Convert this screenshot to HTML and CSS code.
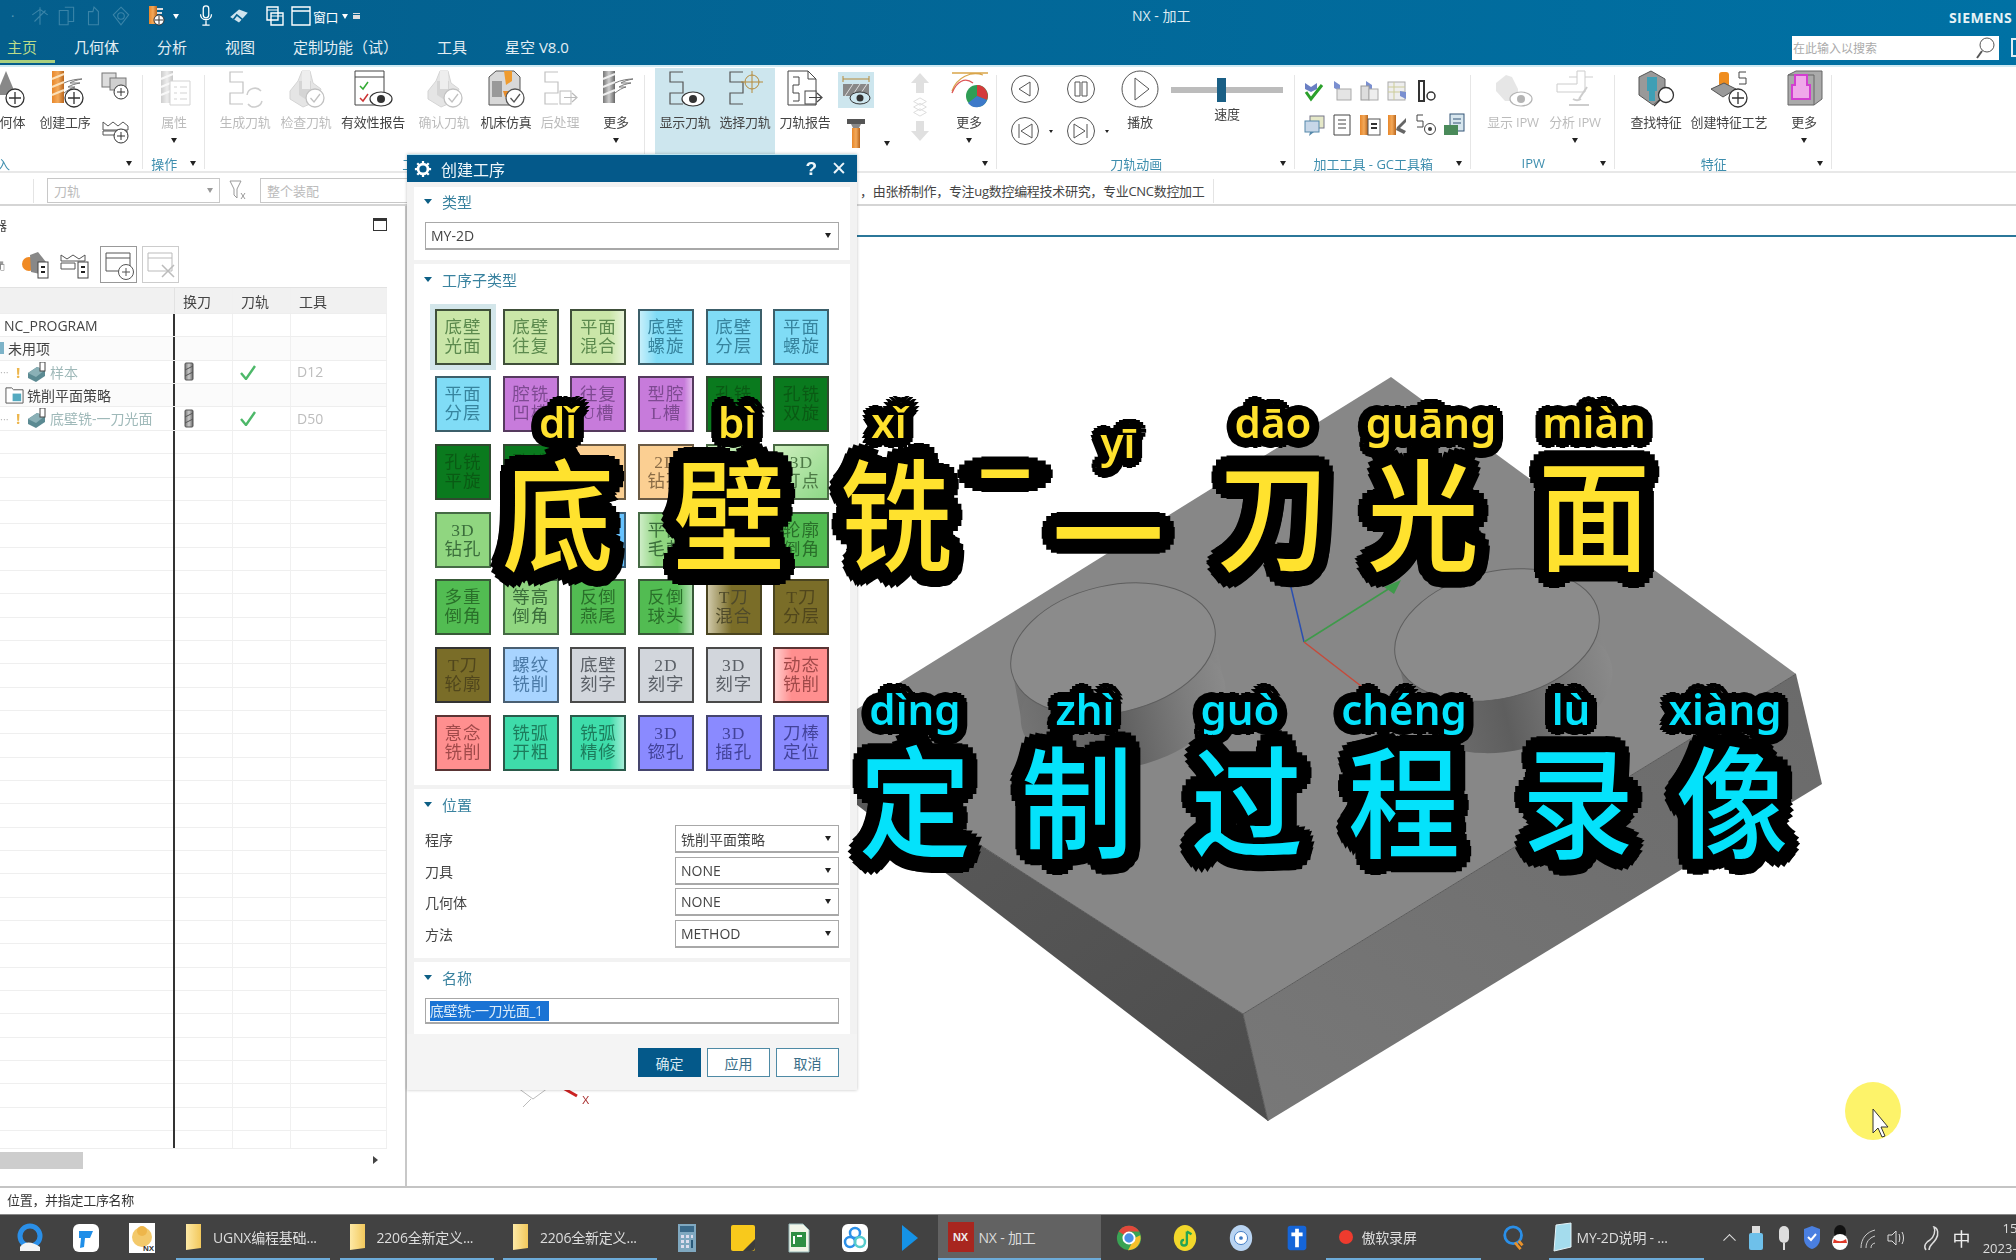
FILE: index.html
```html
<!DOCTYPE html>
<html lang="zh-CN">
<head>
<meta charset="utf-8">
<title>NX - 加工</title>
<link rel="stylesheet" href="styles.css">
</head>
<body>
<svg class="defs" width="0" height="0" aria-hidden="true">
  <defs>
    <linearGradient id="org" x1="0" y1="0" x2="1" y2="0"><stop offset="0" stop-color="#e8872a"/><stop offset=".5" stop-color="#f3a95a"/><stop offset="1" stop-color="#b9651c"/></linearGradient>
    <linearGradient id="gry" x1="0" y1="0" x2="1" y2="0"><stop offset="0" stop-color="#777"/><stop offset=".5" stop-color="#ccc"/><stop offset="1" stop-color="#666"/></linearGradient>
    <linearGradient id="fld" x1="0" y1="0" x2="1" y2="0"><stop offset="0" stop-color="#fde9a6"/><stop offset="1" stop-color="#f2c85c"/></linearGradient>
    <linearGradient id="cyl" x1="0" y1="0" x2="1" y2="0"><stop offset="0" stop-color="#747474"/><stop offset=".45" stop-color="#5e5e5e"/><stop offset=".8" stop-color="#7d7d7d"/><stop offset="1" stop-color="#8a8a8a"/></linearGradient>
    <linearGradient id="lface" x1="0" y1="0" x2="1" y2="1"><stop offset="0" stop-color="#5c5c5c"/><stop offset="1" stop-color="#4c4c4c"/></linearGradient>
    <linearGradient id="rface" x1="0" y1="1" x2="1" y2="0"><stop offset="0" stop-color="#787878"/><stop offset="1" stop-color="#6a6a6a"/></linearGradient>
    <g id="plus"><circle cx="29" cy="29" r="9" fill="#fff" stroke="#333" stroke-width="1.3"/><path d="M29 23v12M23 29h12" stroke="#333" stroke-width="1.3"/></g>
    <g id="chk"><circle cx="29" cy="29" r="9" fill="#fff" stroke="#555" stroke-width="1.3"/><path d="M24.5 29l3.5 4 6-8" fill="none" stroke="#555" stroke-width="1.3"/></g>
    <g id="eye"><ellipse cx="28" cy="30" rx="11" ry="7" fill="#fff" stroke="#333" stroke-width="1.2"/><circle cx="28" cy="30" r="4" fill="#333"/></g>
    <path id="serp" d="M18 3H5v10h13v11H5v11h13" fill="none" stroke="#555" stroke-width="1.2"/>
    <g id="mill"><rect x="7" y="2" width="12" height="32" fill="url(#org)"/><path d="M7 10l12-5M7 18l12-5M7 26l12-5" stroke="#fbe0b8" stroke-width="2"/></g>
    <g id="gmill"><rect x="7" y="2" width="12" height="32" fill="url(#gry)"/><path d="M7 10l12-5M7 18l12-5M7 26l12-5" stroke="#eee" stroke-width="2"/></g>
    <path id="wings" d="M19 14c6-3 13-4 18-4-5 1-9 2-12 4h10c-5 1-9 2-12 4h7c-4 1-7 3-11 6" fill="#fff" stroke="#777"/>
    <g id="block"><path d="M4 22l8-10 4-10h8l3 12 8 6-4 12-14 6-13-8z" fill="#b9b9b9" stroke="#888"/><path d="M13 12h12v14l-6 4-6-4z" fill="#8e8e8e"/><path d="M16 2h8v18h-8z" fill="#d2d2d2"/></g>
    <g id="report"><path d="M3 2h20l8 8v26H3z" fill="#fff" stroke="#444"/><path d="M23 2v8h8M8 8h6M14 8v8H8v8h6v8H8" fill="none" stroke="#444"/></g>
    <g id="arrowbox"><rect x="20" y="22" width="11" height="13" fill="#fff" stroke="#444"/><path d="M24 28.500h12M32 24l5 4.500-5 4.500" fill="none" stroke="#444" stroke-width="1.200"/></g>
    <g id="nxop"><path d="M1 11l9-6 8 3v6l-9 6-8-4z" fill="#5b8a92"/><path d="M1 11l8 4 9-7-8-3z" fill="#8ab0b6"/><rect x="13" y="0" width="5" height="9" fill="#fff" stroke="#444"/></g>
    <g id="cdrill"><rect x="1" y="1" width="8" height="17" rx="1" fill="url(#gry)" stroke="#555"/><path d="M1 8l8-4M1 14l8-4" stroke="#555"/></g>
    <path id="tick" d="M1 9l5 6 9-13" fill="none" stroke="#4db869" stroke-width="2.400"/>
  </defs>
</svg>

<div class="app">
  <header class="titlebar">
    <div class="quick">
      <span class="q-dot">·</span>
      <svg class="qi q-a dim" viewBox="0 0 20 20"><path d="M10 2v16M3 9l7-5 7 5M5 15l10-10" fill="none" stroke="currentColor"/></svg>
      <svg class="qi q-b dim" viewBox="0 0 20 20"><path d="M3 5h8v13H3zM8 2h8v13h-5" fill="none" stroke="currentColor"/></svg>
      <svg class="qi q-b dim" viewBox="0 0 20 20"><path d="M5 18V6h4l1-4 4 4v12z" fill="none" stroke="currentColor"/></svg>
      <svg class="qi q-b dim" viewBox="0 0 20 20"><path d="M10 2l7 7-7 9-7-9z" fill="none" stroke="currentColor"/><circle cx="10" cy="10" r="3" fill="none" stroke="currentColor"/></svg>
      <svg class="qi q-c" viewBox="0 0 20 22"><rect x="3" y="1" width="8" height="18" fill="url(#org)"/><circle cx="13" cy="15" r="5" fill="#fff" stroke="#333"/><path d="M13 11v8M9 15h8" stroke="#333"/><path d="M11 4h6M11 8h5" stroke="#ddd" stroke-width="2"/></svg>
      <span class="car w q-car"></span>
      <svg class="qi q-d" viewBox="0 0 20 24"><rect x="7" y="1" width="6" height="13" rx="3" fill="none" stroke="#fff" stroke-width="1.400"/><path d="M4 10c0 8 12 8 12 0M10 17v5M6 22h8" fill="none" stroke="#fff" stroke-width="1.400"/></svg>
      <svg class="qi q-e" viewBox="0 0 20 20"><path d="M2 11l8-7 8 3-8 9z" fill="#cfe4ee"/><path d="M5 13l3-4 5 4" fill="none" stroke="#05618f" stroke-width="1.500"/></svg>
      <svg class="qi q-f" viewBox="0 0 20 22"><path d="M2 2h11v13H2zM6 8h12v12H6z" fill="none" stroke="#fff" stroke-width="1.400"/><path d="M2 5h11M6 11h12" stroke="#fff"/></svg>
      <svg class="qi q-g" viewBox="0 0 20 22"><path d="M1 2h18v18H1zM1 6h18" fill="none" stroke="#fff" stroke-width="1.400"/></svg>
      <span class="q-text">窗口</span>
      <span class="car w q-c2"></span>
      <span class="q-more"></span>
    </div>
    <div class="app-title">NX - 加工</div>
    <div class="brand">SIEMENS</div>
    <nav class="tabs">
      <a class="tab t1 on">主页</a><a class="tab t2">几何体</a><a class="tab t3">分析</a><a class="tab t4">视图</a><a class="tab t5">定制功能（试）</a><a class="tab t6">工具</a><a class="tab t7">星空 V8.0</a>
      <div class="search"><span>在此输入以搜索</span><svg viewBox="0 0 20 24" width="20" height="24"><circle cx="12" cy="9" r="7" fill="#fff" stroke="#555"/><path d="M7 15l-5 7" stroke="#555" stroke-width="2"/></svg></div>
      <span class="win-frame"></span>
    </nav>
  </header>

  <section class="ribbon">
    <div class="grp g1">
      <div class="tools">
        <div class="tool t-a"><svg class="ic" viewBox="0 0 40 40"><path d="M10 26L20 2l10 24z" fill="#888"/><use href="#plus"/></svg><span class="lb">几何体</span></div>
        <div class="tool t-b"><svg class="ic" viewBox="0 0 40 40"><use href="#mill"/><use href="#wings"/><use href="#plus"/></svg><span class="lb">创建工序</span></div>
        <div class="smallcol">
          <svg class="ic-s" viewBox="0 0 30 30"><rect x="1" y="2" width="14" height="14" fill="#ddd" stroke="#777"/><rect x="9" y="7" width="16" height="12" fill="#cfcfcf" stroke="#777"/><circle cx="20" cy="21" r="7" fill="#fff" stroke="#333"/><path d="M20 17v8M16 21h8" stroke="#333"/></svg>
          <svg class="ic-s" viewBox="0 0 30 30"><path d="M2 8l5 4 5-4 5 4 5-4 5 4v4H2zM2 17h24v4H2z" fill="#fff" stroke="#555"/><circle cx="20" cy="22" r="7" fill="#fff" stroke="#333"/><path d="M20 18v8M16 22h8" stroke="#333"/></svg>
        </div>
      </div>
      <div class="foot f1"><span class="gl gl-in">插入</span><i class="car"></i></div>
    </div>
    <div class="grp g2">
      <div class="tools">
        <div class="tool off"><svg class="ic" viewBox="0 0 40 40"><use href="#gmill"/><path d="M16 12h20v24H16z" fill="#fff" stroke="#888"/><path d="M20 18h3M26 18h7M20 24h3M26 24h7M20 30h3M26 30h7" stroke="#888"/></svg><span class="lb">属性</span><i class="car mt"></i></div>
      </div>
      <div class="foot"><span class="gl">操作</span><i class="car"></i></div>
    </div>
    <div class="grp g3">
      <div class="tools">
        <div class="tool off"><svg class="ic" viewBox="0 0 40 40"><use href="#serp"/><path d="M22 26a8 8 0 0 1 14-4M37 32a8 8 0 0 1-14 3" fill="none" stroke="#777" stroke-width="1.500"/></svg><span class="lb">生成刀轨</span></div>
        <div class="tool off"><svg class="ic" viewBox="0 0 40 40"><use href="#block"/><use href="#chk"/></svg><span class="lb">检查刀轨</span></div>
        <div class="tool"><svg class="ic" viewBox="0 0 40 40"><path d="M2 2h29v34H2z" fill="#fff" stroke="#444"/><path d="M2 8h29" stroke="#444"/><path d="M7 17l3 3 5-7" fill="none" stroke="#3a3" stroke-width="1.500"/><path d="M7 29l3 3 5-7" fill="none" stroke="#c33" stroke-width="1.500"/><use href="#eye"/></svg><span class="lb">有效性报告</span></div>
        <div class="tool off"><svg class="ic" viewBox="0 0 40 40"><use href="#block"/><use href="#chk"/></svg><span class="lb">确认刀轨</span></div>
        <div class="tool"><svg class="ic" viewBox="0 0 40 40"><path d="M3 8l7-6h18l6 6v28H3z" fill="#d8d8d8" stroke="#555"/><rect x="6" y="12" width="10" height="16" fill="#999"/><path d="M18 2h8v10l-6 4z" fill="#ef9b2e"/><path d="M17 22h10v6h-8z" fill="#e88c2a"/><use href="#chk"/></svg><span class="lb">机床仿真</span></div>
        <div class="tool off"><svg class="ic" viewBox="0 0 40 40"><use href="#serp"/><use href="#arrowbox"/></svg><span class="lb">后处理</span></div>
        <div class="tool"><svg class="ic" viewBox="0 0 40 40"><use href="#gmill"/><use href="#wings"/></svg><span class="lb">更多</span><i class="car mt"></i></div>
      </div>
      <div class="foot"><span class="gl">工序</span><i class="car"></i></div>
    </div>
    <div class="grp g4">
      <div class="tools">
        <div class="tool on"><svg class="ic" viewBox="0 0 40 40"><use href="#serp"/><use href="#eye"/></svg><span class="lb">显示刀轨</span></div>
        <div class="tool on"><svg class="ic" viewBox="0 0 40 40"><use href="#serp"/><circle cx="27" cy="13" r="7" fill="none" stroke="#b58a3a"/><path d="M27 2v22M16 13h22" stroke="#b58a3a"/></svg><span class="lb">选择刀轨</span></div>
        <div class="tool"><svg class="ic" viewBox="0 0 40 40"><use href="#report"/><use href="#arrowbox"/></svg><span class="lb">刀轨报告</span></div>
        <div class="smallcol sc2">
          <svg class="ic-h" viewBox="0 0 36 36"><rect width="36" height="36" fill="#cde6ee"/><path d="M5 7h26M5 4v6M31 4v6" stroke="#b58a3a"/><rect x="5" y="12" width="26" height="12" fill="#888"/><path d="M7 24l8-12M14 24l8-12M21 24l8-12" stroke="#ddd"/><ellipse cx="22" cy="26" rx="10" ry="6" fill="#cde6ee" stroke="#333"/><circle cx="22" cy="26" r="3.500" fill="#333"/></svg>
          <svg class="ic-t" viewBox="0 0 20 32"><path d="M1 2h18v5H1z" fill="#555"/><path d="M5 7h10l-2 4H7z" fill="#888"/><rect x="6" y="11" width="8" height="20" fill="url(#org)"/></svg>
        </div>
        <div class="carcol"><i class="car"></i></div>
        <div class="updown off">
          <svg viewBox="0 0 20 22" width="20" height="22"><path d="M10 1l9 10h-5v10H6V11H1z" fill="#aaa"/></svg>
          <svg viewBox="0 0 20 22" width="20" height="20"><path d="M3 5l7-4 7 4-7 4zM3 11l7-4 7 4-7 4zM3 17l7-4 7 4-7 4z" fill="#fff" stroke="#999"/></svg>
          <svg viewBox="0 0 20 22" width="20" height="22"><path d="M10 21L1 11h5V1h8v10h5z" fill="#aaa"/></svg>
        </div>
        <div class="tool"><svg class="ic" viewBox="0 0 40 40"><path d="M3 4h36M3 22C8 8 22 2 34 6" fill="none" stroke="#d9a54a" stroke-width="1.300"/><path d="M3 24C8 12 16 8 24 14" fill="none" stroke="#d55" stroke-width="1.300"/><circle cx="28" cy="27" r="11" fill="#2f9d55"/><path d="M28 27V16a11 11 0 0 1 10 15z" fill="#d43b3b"/><path d="M28 27l10 4a11 11 0 0 1-19 3z" fill="#3d79c9"/></svg><span class="lb">更多</span><i class="car mt"></i></div>
      </div>
      <div class="foot"><span class="gl"></span><i class="car"></i></div>
    </div>
    <div class="grp g5">
      <div class="tools">
        <div class="anim">
          <svg class="ac" viewBox="0 0 56 32"><circle cx="28" cy="16" r="13.500" fill="none" stroke="#555"/><path d="M33 9v14l-11-7z" fill="none" stroke="#555"/></svg>
          <svg class="ac" viewBox="0 0 56 32"><circle cx="28" cy="16" r="13.500" fill="none" stroke="#555"/><path d="M21 9v14l11-7zM34 9v14" transform="matrix(-1 0 0 1 56 0)" fill="none" stroke="#555"/><path d="M52 15h4l-2 3z" fill="#222"/></svg>
        </div>
        <div class="anim">
          <svg class="ac" viewBox="0 0 56 32"><circle cx="28" cy="16" r="13.500" fill="none" stroke="#555"/><path d="M22 9h5v14h-5zM29 9h5v14h-5z" fill="none" stroke="#555"/></svg>
          <svg class="ac" viewBox="0 0 56 32"><circle cx="28" cy="16" r="13.500" fill="none" stroke="#555"/><path d="M21 9v14l11-7zM34 9v14" fill="none" stroke="#555"/><path d="M52 15h4l-2 3z" fill="#222"/></svg>
        </div>
        <div class="tool"><svg class="ic" viewBox="0 0 40 40"><circle cx="20" cy="20" r="18" fill="none" stroke="#555"/><path d="M15 9v22l14-11z" fill="none" stroke="#555"/></svg><span class="lb">播放</span></div>
        <div class="speed"><div class="slider"><i></i></div><span class="lb">速度</span></div>
      </div>
      <div class="foot"><span class="gl">刀轨动画</span><i class="car"></i></div>
    </div>
    <div class="grp g6">
      <div class="tools">
        <div class="mini">
          <svg viewBox="0 0 24 24"><path d="M3 4l6 4 6-4v6l-6 3-6-3z" fill="#6a7fc4"/><path d="M4 13l5 7 11-14" fill="none" stroke="#2ba02b" stroke-width="3"/></svg>
          <svg viewBox="0 0 24 24"><path d="M4 2l6 4v6L4 9z" fill="#7a8fd0"/><rect x="7" y="10" width="14" height="11" fill="#e4e4e4" stroke="#aaa"/></svg>
          <svg viewBox="0 0 24 24"><path d="M8 2l6 4v6L8 9z" fill="#7a8fd0"/><rect x="3" y="7" width="8" height="14" fill="#ddd" stroke="#999"/><rect x="11" y="10" width="9" height="11" fill="#eee" stroke="#aaa"/></svg>
          <svg viewBox="0 0 24 24"><rect x="2" y="3" width="17" height="18" fill="#eee" stroke="#aaa"/><path d="M2 8h17M2 13h17M8 3v18" stroke="#cc9"/><path d="M14 12l6 1v7l-6-3z" fill="#7a8fd0"/></svg>
          <svg viewBox="0 0 24 24"><path d="M5 2h5v20H5z" fill="none" stroke="#333" stroke-width="2"/><circle cx="17" cy="17" r="4" fill="none" stroke="#333" stroke-width="1.500"/></svg>
          <i></i>
          <svg viewBox="0 0 24 24"><rect x="8" y="3" width="14" height="12" fill="#e5e8c8" stroke="#778"/><rect x="3" y="8" width="14" height="11" fill="#c7d7e8" stroke="#58a"/><path d="M8 19l-1 4 5-4" fill="#58a"/></svg>
          <svg viewBox="0 0 24 24"><path d="M4 2h16v20H4z" fill="#fff" stroke="#444"/><path d="M8 7h8M8 11h8M8 15h8" stroke="#444"/></svg>
          <svg viewBox="0 0 24 24"><rect x="2" y="2" width="8" height="20" fill="url(#org)"/><rect x="10" y="6" width="12" height="16" fill="#fff" stroke="#555"/><path d="M13 11h6M13 15h6" stroke="#333" stroke-width="2"/></svg>
          <svg viewBox="0 0 24 24"><rect x="2" y="2" width="8" height="20" fill="url(#org)"/><path d="M11 14l9-9v4l-6 6 6 3-2 3-8-4z" fill="#666"/></svg>
          <svg viewBox="0 0 24 24"><path d="M9 2H3v6h6v6H3" fill="none" stroke="#444"/><circle cx="16" cy="16" r="5.500" fill="#fff" stroke="#444"/><circle cx="16" cy="16" r="2" fill="#444"/></svg>
          <svg viewBox="0 0 24 24"><rect x="8" y="1" width="14" height="17" fill="#d7e6ee" stroke="#357"/><path d="M11 6h8M11 10h8" stroke="#357"/><rect x="2" y="12" width="14" height="10" fill="#4a8a5a"/></svg>
        </div>
      </div>
      <div class="foot"><span class="gl">加工工具 - GC工具箱</span><i class="car"></i></div>
    </div>
    <div class="grp g7">
      <div class="tools">
        <div class="tool off"><svg class="ic" viewBox="0 0 40 40"><path d="M3 14l10-8 6 2 6 12v12H12L3 22z" fill="#bbb"/><use href="#eye"/></svg><span class="lb">显示 IPW</span></div>
        <div class="tool off"><svg class="ic" viewBox="0 0 40 40"><path d="M2 15h20v-13h8v21H2z" fill="#fff" stroke="#777"/><path d="M14 8h8M30 8h8" stroke="#777"/><path d="M32 18l-8 12M14 36h20M26 30a8 8 0 0 1-8 0" fill="none" stroke="#777" stroke-width="2"/></svg><span class="lb">分析 IPW</span><i class="car mt"></i></div>
      </div>
      <div class="foot"><span class="gl">IPW</span><i class="car"></i></div>
    </div>
    <div class="grp g8">
      <div class="tools">
        <div class="tool"><svg class="ic" viewBox="0 0 40 40"><path d="M3 8l12-6 14 8v16l-12 10-14-10z" fill="#999" stroke="#555"/><path d="M11 8h10v14h-2v10h-6V22h-2z" fill="#3f9fb5"/><circle cx="30" cy="26" r="7.500" fill="#fff" stroke="#333" stroke-width="1.300"/><path d="M24 31l-6 6" stroke="#333" stroke-width="1.500"/></svg><span class="lb">查找特征</span></div>
        <div class="tool"><svg class="ic" viewBox="0 0 40 40"><rect x="10" y="3" width="10" height="15" rx="3" fill="#ef8d1f"/><path d="M2 20l13-6 12 6-13 8z" fill="#9a9a9a" stroke="#555"/><path d="M37 3h-7v6h7v6h-7" fill="none" stroke="#444"/><use href="#plus"/></svg><span class="lb">创建特征工艺</span></div>
        <div class="tool"><svg class="ic" viewBox="0 0 40 40"><path d="M4 6l8-4h26v28l-8 6H4z" fill="#aaa" stroke="#666"/><path d="M4 6h26v30" fill="none" stroke="#666"/><path d="M11 6h12v10h3v14H8V16h3z" fill="#f0a8ea" stroke="#d23fd0" stroke-width="2"/></svg><span class="lb">更多</span><i class="car mt"></i></div>
      </div>
      <div class="foot"><span class="gl">特征</span><i class="car"></i></div>
    </div>
  </section>

  <section class="filterbar">
    <span class="fb-sep"></span>
    <div class="fb-sel s1"><span>刀轨</span><i class="car g"></i></div>
    <svg class="fb-ic" viewBox="0 0 20 24" width="20" height="24"><path d="M2 2h11l-4 8v9l-3-3v-6z" fill="#fff" stroke="#999"/><path d="M13 14l4 6M17 14l-4 6" stroke="#999"/></svg>
    <div class="fb-sel s2"><span>整个装配</span></div>
    <span class="fb-note">，由张桥制作，专注ug数控编程技术研究，专业CNC数控加工</span>
    <span class="fb-sep2"></span>
  </section>

  <main class="workspace">
    <aside class="navpanel">
      <div class="nav-head"><span class="nav-title">工序导航器</span><span class="maxbtn"></span></div>
      <div class="nav-tools">
        <svg viewBox="0 0 30 30" class="nt n1"><rect x="-10" y="6" width="18" height="20" fill="#999"/><rect x="2" y="14" width="8" height="14" fill="#fff" stroke="#555"/></svg>
        <svg viewBox="0 0 30 30" class="nt n2"><circle cx="9" cy="14" r="7" fill="#f08a24"/><path d="M10 5l8-3 8 10-6 12-9-2z" fill="#888"/><rect x="18" y="12" width="10" height="16" fill="#fff" stroke="#444"/><path d="M21 17h4M21 22h4" stroke="#222" stroke-width="2"/></svg>
        <svg viewBox="0 0 30 30" class="nt n3"><path d="M1 5l6 4 6-4 6 4 6-4v6H1zM1 13h14v6H1z" fill="#fff" stroke="#555"/><rect x="18" y="12" width="10" height="16" fill="#fff" stroke="#444"/><path d="M21 17h4M21 22h4" stroke="#222" stroke-width="2"/></svg>
        <span class="nbtn"><svg viewBox="0 0 32 32" width="32" height="32"><path d="M3 4h24v18H3zM3 9h24" fill="none" stroke="#555"/><circle cx="23" cy="23" r="7.500" fill="#fff" stroke="#555"/><path d="M23 19v8M19 23h8" stroke="#555"/></svg></span>
        <span class="nbtn dis"><svg viewBox="0 0 32 32" width="32" height="32"><path d="M3 4h24v18H3zM3 9h24" fill="none" stroke="#bbb"/><path d="M17 16l12 12M29 16L17 28" stroke="#bbb" stroke-width="1.500"/></svg></span>
      </div>
      <div class="table">
        <div class="row head"><div class="c1"></div><div class="c2">换刀</div><div class="c3">刀轨</div><div class="c4">工具</div></div>
        <div class="row"><div class="c1 ind-a">NC_PROGRAM</div><div class="c2"></div><div class="c3"></div><div class="c4"></div></div>
        <div class="row alt"><div class="c1 ind-b"><i class="blue-sq"></i>未用项</div><div class="c2"></div><div class="c3"></div><div class="c4"></div></div>
        <div class="row"><div class="c1 ind-c"><span class="dots">···</span><span class="warn">!</span><svg class="opi" viewBox="0 0 20 20"><use href="#nxop"/></svg><span class="muted">样本</span></div><div class="c2"><svg class="cd" viewBox="0 0 10 19"><use href="#cdrill"/></svg></div><div class="c3"><svg class="ct" viewBox="0 0 16 16"><use href="#tick"/></svg></div><div class="c4 tl">D12</div></div>
        <div class="row alt"><div class="c1 ind-d"><svg class="fo" viewBox="0 0 20 21"><path d="M1 3h6l2 2h10v14H1z" fill="#fff" stroke="#555"/><rect x="8" y="9" width="9" height="8" fill="#55aac0"/></svg>铣削平面策略</div><div class="c2"></div><div class="c3"></div><div class="c4"></div></div>
        <div class="row"><div class="c1 ind-c"><span class="dots">···</span><span class="warn">!</span><svg class="opi" viewBox="0 0 20 20"><use href="#nxop"/></svg><span class="muted">底壁铣-一刀光面</span></div><div class="c2"><svg class="cd" viewBox="0 0 10 19"><use href="#cdrill"/></svg></div><div class="c3"><svg class="ct" viewBox="0 0 16 16"><use href="#tick"/></svg></div><div class="c4 tl">D50</div></div>
        <div class="row filler"><div class="c1"></div><div class="c2"></div><div class="c3"></div><div class="c4"></div></div>
      </div>
      <div class="hscroll"><i class="thumb"></i><i class="sarrow"></i></div>
    </aside>

    <section class="viewport">
      <div class="vp-tabs"></div>
      <svg class="model" viewBox="408 208 1608 980" width="1608" height="980">
        <path d="M814 739L1245 1016 1270 1123 850 800z" fill="url(#lface)"/>
        <path d="M1245 1016L1798 676 1824 786 1270 1123z" fill="url(#rface)"/>
        <path d="M1393 379L1798 676 1245 1016 814 739z" fill="#878787"/>
        <path d="M1245 1016L1798 676M1245 1016L814 739M1245 1016L1270 1123" stroke="#5a5a5a" stroke-width="1" fill="none"/>
        <path d="M1013 665L1217 637 1227 692 1023 720z" fill="url(#cyl)"/>
        <ellipse cx="1125" cy="706" rx="104" ry="63.500" transform="rotate(-13 1125 706)" fill="url(#cyl)"/>
        <ellipse cx="1115" cy="651" rx="104" ry="63.500" transform="rotate(-13 1115 651)" fill="#8b8b8b" stroke="#5e5e5e"/>
        <path d="M1397 651L1601 623 1614 675 1410 703z" fill="url(#cyl)"/>
        <ellipse cx="1512" cy="689" rx="104" ry="63.500" transform="rotate(-13 1512 689)" fill="url(#cyl)"/>
        <ellipse cx="1499" cy="637" rx="104" ry="63.500" transform="rotate(-13 1499 637)" fill="#8b8b8b" stroke="#5e5e5e"/>
        <path d="M1306 644L1286 560" stroke="#2b4fb0" stroke-width="1.500"/>
        <path d="M1306 644L1392 590" stroke="#3e9a4a" stroke-width="1.500"/>
        <path d="M1386 589l17-7-7 14z" fill="#3e9a4a"/>
        <path d="M1306 644L1385 705" stroke="#c64a3a" stroke-width="1.500"/>
        <path d="M520 1090l15 11 15-11M533 1101l-8 8" stroke="#bbb" fill="none"/>
        <path d="M565 1090l14 8" stroke="#c22" stroke-width="3"/>
        <text x="584" y="1106" class="axis-x">X</text>
        <ellipse cx="1875" cy="1113" rx="28" ry="29" fill="#fdf36a"/>
        <path d="M1875 1111v24l5-5 4 9 3-1-4-9h7z" fill="#fff" stroke="#333"/>
      </svg>
    </section>
  </main>

  <footer class="status">位置，并指定工序名称</footer>

  <div class="taskbar">
    <span class="ts s0"><svg viewBox="0 0 28 30"><circle cx="14" cy="13" r="10" fill="none" stroke="#2a8fe8" stroke-width="5"/><path d="M4 24c4-6 12-6 20 0v4H4z" fill="#f4f4f4"/></svg></span>
    <span class="ts"><svg viewBox="0 0 28 30"><rect x="1" y="1" width="26" height="28" rx="6" fill="#fff"/><path d="M7 8h14l-3 7h-5l-1 9-4 1 1-10H7z" fill="#1f8ee8"/></svg></span>
    <span class="ts"><svg viewBox="0 0 28 30"><rect x="1" y="0" width="26" height="30" fill="#fff"/><circle cx="14" cy="14" r="10" fill="#f3c96b"/><circle cx="14" cy="8" r="5" fill="#eeb64a"/><text x="15" y="28" class="mini-nx">NX</text></svg></span>
    <span class="tb b1"><svg viewBox="0 0 20 30"><path d="M2 2h7l8 0v24l-15 2z" fill="url(#fld)"/></svg><em>UGNX编程基础...</em></span>
    <span class="tb"><svg viewBox="0 0 20 30"><path d="M2 2h7l8 0v24l-15 2z" fill="url(#fld)"/></svg><em>2206全新定义...</em></span>
    <span class="tb"><svg viewBox="0 0 20 30"><path d="M2 2h7l8 0v24l-15 2z" fill="url(#fld)"/></svg><em>2206全新定义...</em></span>
    <span class="ts t2s"><svg viewBox="0 0 28 30"><rect x="5" y="1" width="18" height="28" fill="#7fa8c0"/><rect x="7" y="3" width="14" height="6" fill="#3a6a8a"/><path d="M8 12h3v3H8zM13 12h3v3h-3zM18 12h2v3h-2zM8 17h3v3H8zM13 17h3v3h-3zM8 22h3v3H8zM13 22h3v3h-3z" fill="#dde"/><rect x="18" y="17" width="2" height="8" fill="#2a5a7a"/></svg></span>
    <span class="ts"><svg viewBox="0 0 28 30"><rect x="2" y="2" width="24" height="26" rx="2" fill="#f8c91c"/><path d="M14 28l12-12v8a4 4 0 0 1-4 4z" fill="#3c3c3c"/></svg></span>
    <span class="ts"><svg viewBox="0 0 28 30"><path d="M4 1h14l6 6v22H4z" fill="#f1f5e8" stroke="#9bb"/><rect x="6" y="9" width="15" height="15" fill="#2f8f44"/><path d="M9 13v8M12 13h5" stroke="#fff" stroke-width="2"/></svg></span>
    <span class="ts"><svg viewBox="0 0 28 30"><rect x="1" y="1" width="26" height="28" rx="6" fill="#fff"/><circle cx="14" cy="10" r="5" fill="none" stroke="#2c90e8" stroke-width="2.500"/><circle cx="9" cy="19" r="5" fill="none" stroke="#2c90e8" stroke-width="2.500"/><circle cx="19" cy="19" r="5" fill="none" stroke="#5cc" stroke-width="2.500"/></svg></span>
    <span class="ts tn"><svg viewBox="0 0 28 30"><path d="M8 2l16 13L8 28z" fill="#1592e6"/></svg></span>
    <span class="tb nx"><span class="nx-logo">NX</span><em>NX - 加工</em></span>
    <span class="ts"><svg viewBox="0 0 30 30"><circle cx="15" cy="15" r="13" fill="#3aa354"/><path d="M15 2a13 13 0 0 1 11 6H15z" fill="#e1483b"/><path d="M4 8a13 13 0 0 1 11-6v13z" fill="#e1483b"/><path d="M27 12a13 13 0 0 1-13 16l7-13z" fill="#f6c02c"/><circle cx="15" cy="15" r="6" fill="#4a8fe7" stroke="#fff" stroke-width="2"/></svg></span>
    <span class="ts"><svg viewBox="0 0 30 30"><ellipse cx="15" cy="15" rx="12" ry="14" fill="#f2d72b"/><path d="M17 8v12a3 3 0 1 1-3-3M17 8l5 3" fill="none" stroke="#23a455" stroke-width="2.500"/></svg></span>
    <span class="ts"><svg viewBox="0 0 30 30"><ellipse cx="15" cy="15" rx="12" ry="14" fill="#b9d4f2"/><circle cx="15" cy="15" r="7" fill="#fff" stroke="#3c78c2"/><circle cx="15" cy="15" r="2" fill="#3c78c2"/></svg></span>
    <span class="ts"><svg viewBox="0 0 30 30"><rect x="5" y="2" width="20" height="26" rx="3" fill="#1565d8"/><path d="M15 5v20M9 11h12" stroke="#fff" stroke-width="4"/></svg></span>
    <span class="tb rec"><svg viewBox="0 0 20 20"><circle cx="10" cy="10" r="7" fill="#ee3b2e"/></svg><em>傲软录屏</em></span>
    <span class="ts tqq"><svg viewBox="0 0 30 30"><circle cx="13" cy="12" r="9" fill="none" stroke="#2a8fe8" stroke-width="3"/><path d="M15 20l6 7M19 18l4 5" stroke="#e8912a" stroke-width="3"/></svg></span>
    <span class="tb doc"><svg viewBox="0 0 22 30"><path d="M5 3l15-2v24l-17 4z" fill="#a4dced" stroke="#e4f4f8"/></svg><em>MY-2D说明 - ...</em></span>
    <div class="tray">
      <span class="tr-up"></span>
      <svg viewBox="0 0 20 28"><rect x="3" y="9" width="14" height="17" rx="2" fill="#6ec0ea"/><rect x="6" y="2" width="8" height="7" fill="#ddd"/></svg>
      <svg viewBox="0 0 20 28"><rect x="5" y="2" width="10" height="17" rx="5" fill="#ddd"/><path d="M10 19v7" stroke="#ddd" stroke-width="2"/></svg>
      <svg viewBox="0 0 20 28"><path d="M10 2l8 3v10c0 5-4 9-8 10-4-1-8-5-8-10V5z" fill="#4a7fe0"/><path d="M6 13l3 3 5-6" stroke="#fff" stroke-width="2" fill="none"/></svg>
      <svg viewBox="0 0 20 28"><ellipse cx="10" cy="8" rx="6" ry="7" fill="#111"/><ellipse cx="10" cy="18" rx="8" ry="8" fill="#fff"/><path d="M4 15c4 3 8 3 12 0l1 4H3z" fill="#e03a2a"/></svg>
      <svg viewBox="0 0 20 28"><path d="M3 24C3 14 9 8 17 6M8 24c0-6 3-10 9-12M13 24c0-3 1-4 4-5" fill="none" stroke="#ccc"/></svg>
      <svg viewBox="0 0 20 28"><path d="M2 11h4l4-4v14l-4-4H2z" fill="none" stroke="#ddd"/><path d="M13 10c1 2 1 6 0 8M16 8c2 3 2 9 0 12" fill="none" stroke="#ddd"/></svg>
      <svg viewBox="0 0 20 28" class="pen"><path d="M4 26c-3-4 0-8 4-10 4-3 6-9 4-13 4 1 5 7 2 12s-7 6-7 11" fill="none" stroke="#ddd" stroke-width="1.500"/></svg>
      <span class="ime">中</span>
      <span class="clock"><b>15:47</b><b>2023-06-12</b></span>
    </div>
  </div>

  <div class="dialog">
    <div class="dlg-title">
      <svg viewBox="0 0 20 20" width="18" height="18"><circle cx="10" cy="10" r="5.500" fill="none" stroke="#fff" stroke-width="3"/><path d="M10 1v3M10 16v3M1 10h3M16 10h3M3.600 3.600l2 2M14.400 14.400l2 2M3.600 16.400l2-2M14.400 5.600l2-2" stroke="#fff" stroke-width="2.500"/></svg>
      <span class="dt">创建工序</span>
      <span class="dq">?</span><span class="dx">✕</span>
    </div>
    <div class="sec s-type">
      <h3 class="sh"><i></i>类型</h3>
      <div class="sel wide"><span>MY-2D</span><i class="car"></i></div>
    </div>
    <div class="sec s-sub">
      <h3 class="sh"><i></i>工序子类型</h3>
      <div class="tiles">
        <div class="tile lg sel1">底壁<br>光面</div>
        <div class="tile lg">底壁<br>往复</div>
        <div class="tile lg fr">平面<br>混合</div>
        <div class="tile cy fl">底壁<br>螺旋</div>
        <div class="tile cy">底壁<br>分层</div>
        <div class="tile cy">平面<br>螺旋</div>

        <div class="tile cy">平面<br>分层</div>
        <div class="tile pu">腔铣<br>凹槽</div>
        <div class="tile pu">往复<br>U槽</div>
        <div class="tile pu fr2">型腔<br>L槽</div>
        <div class="tile dg">孔铣<br>单旋</div>
        <div class="tile dg">孔铣<br>双旋</div>

        <div class="tile dg">孔铣<br>平旋</div>
        <div class="tile dg">孔铣<br>螺旋</div>
        <div class="tile or">3D<br>打点</div>
        <div class="tile or">2D<br>钻孔</div>
        <div class="tile lt">2D<br>打点</div>
        <div class="tile lt">3D<br>打点</div>

        <div class="tile mg">3D<br>钻孔</div>
        <div class="tile mg">2D<br>沉孔</div>
        <div class="tile bl">螺纹<br>孔孑</div>
        <div class="tile mg fl">平面<br>毛刺</div>
        <div class="tile gr">轮廓<br>去刺</div>
        <div class="tile gr">轮廓<br>倒角</div>

        <div class="tile gr">多重<br>倒角</div>
        <div class="tile mg">等高<br>倒角</div>
        <div class="tile gr">反倒<br>燕尾</div>
        <div class="tile gr fr">反倒<br>球头</div>
        <div class="tile tm">T刀<br>混合</div>
        <div class="tile tt">T刀<br>分层</div>

        <div class="tile tt dk">T刀<br>轮廓</div>
        <div class="tile sk">螺纹<br>铣削</div>
        <div class="tile gy">底壁<br>刻字</div>
        <div class="tile gy">2D<br>刻字</div>
        <div class="tile gy">3D<br>刻字</div>
        <div class="tile pk fl">动态<br>铣削</div>

        <div class="tile pk">意念<br>铣削</div>
        <div class="tile tq">铣弧<br>开粗</div>
        <div class="tile tq fr">铣弧<br>精修</div>
        <div class="tile vi">3D<br>锪孔</div>
        <div class="tile vi">3D<br>插孔</div>
        <div class="tile vi">刀棒<br>定位</div>
      </div>
    </div>
    <div class="sec s-pos">
      <h3 class="sh"><i></i>位置</h3>
      <div class="frow"><label>程序</label><div class="sel"><span>铣削平面策略</span><i class="car"></i></div></div>
      <div class="frow"><label>刀具</label><div class="sel"><span>NONE</span><i class="car"></i></div></div>
      <div class="frow"><label>几何体</label><div class="sel"><span>NONE</span><i class="car"></i></div></div>
      <div class="frow"><label>方法</label><div class="sel"><span>METHOD</span><i class="car"></i></div></div>
    </div>
    <div class="sec s-name">
      <h3 class="sh"><i></i>名称</h3>
      <div class="namebox"><span>底壁铣-一刀光面_1</span></div>
    </div>
    <div class="dlg-foot">
      <button class="btn pri">确定</button><button class="btn">应用</button><button class="btn">取消</button>
    </div>
  </div>

  <div class="cap cap1">
    <div class="cc"><span class="py">dǐ</span><span class="hz">底</span></div>
    <div class="cc nudge-r"><span class="py">bì</span><span class="hz">壁</span></div>
    <div class="cc nudge-l"><span class="py">xǐ</span><span class="hz">铣</span></div>
    <div class="cc dash"><span class="py"></span><span class="hz">-</span></div>
    <div class="cc yi"><span class="py">yī</span><span class="hz">一</span></div>
    <div class="cc"><span class="py">dāo</span><span class="hz">刀</span></div>
    <div class="cc nudge-r"><span class="py">guāng</span><span class="hz">光</span></div>
    <div class="cc"><span class="py">miàn</span><span class="hz">面</span></div>
  </div>
  <div class="cap cap2">
    <div class="cc"><span class="py">dìng</span><span class="hz">定</span></div>
    <div class="cc nudge-r"><span class="py">zhì</span><span class="hz">制</span></div>
    <div class="cc nudge-l"><span class="py">guò</span><span class="hz">过</span></div>
    <div class="cc"><span class="py">chéng</span><span class="hz">程</span></div>
    <div class="cc nudge-l"><span class="py">lù</span><span class="hz">录</span></div>
    <div class="cc nudge-l"><span class="py">xiàng</span><span class="hz">像</span></div>
  </div>
</div>
</body>
</html>
```

FILE: styles.css
```css
* { box-sizing: border-box; }
html, body { margin: 0; padding: 0; background: #fff; }
.defs { position: absolute; }
.app {
  position: relative; width: 2016px; height: 1260px; overflow: hidden;
  display: flex; flex-direction: column;
  font-family: "Open Sans", "Noto Sans CJK SC", sans-serif; font-size: 13px; color: #444;
  filter: blur(.45px);
}
i, em { font-style: normal; }
.car { display: inline-block; width: 0; height: 0; border-left: 3.5px solid transparent; border-right: 3.5px solid transparent; border-top: 5px solid #222; }
.car.w { border-top-color: #fff; }
.car.g { border-top-color: #999; }
.car.mt { margin-top: 7px; }

/* Title bar */
.titlebar { position: relative; height: 65px; background: linear-gradient(90deg, #045e8c, #0071a4); color: #fff; flex: none; }
.quick { height: 32px; display: flex; align-items: center; padding-left: 11px; }
.q-dot { color: #5a9ab8; width: 16px; }
.qi { height: 22px; width: 22px; display: block; }
.dim { color: #3a84a8; }
.q-a { margin-left: 2px; }
.q-b { margin-left: 5px; }
.q-c { margin-left: 13px; }
.q-car { margin-left: 6px; margin-right: 16px; }
.q-d { margin-left: 0; }
.q-e { margin-left: 11px; }
.q-f { margin-left: 14px; }
.q-g { margin-left: 4px; }
.q-text { font-size: 13px; margin-left: 1px; letter-spacing: -.5px; }
.q-c2 { margin-left: 4px; }
.q-more { width: 7px; height: 6px; margin-left: 5px; border-top: 1px solid #ddd; border-bottom: 4px solid #ddd; }
.app-title { position: absolute; left: 1132px; top: 5px; font-size: 14px; color: #dcebf2; }
.brand { position: absolute; left: 1949px; top: 8px; font: 700 14px "Open Sans", sans-serif; color: #e6f2f6; letter-spacing: .4px; }
.tabs { position: relative; height: 33px; }
.tab { position: absolute; top: 4px; font-size: 15px; line-height: 22px; color: #e3eef3; white-space: nowrap; }
.tab.on { color: #bcdc8a; }
.tab.on::after { content: ""; position: absolute; left: -7px; right: -18px; top: 24px; height: 3px; background: #a9cf7f; }
.t1 { left: 7px; } .t2 { left: 74px; } .t3 { left: 157px; } .t4 { left: 225px; } .t5 { left: 293px; } .t6 { left: 437px; } .t7 { left: 505px; }
.search { position: absolute; left: 1792px; top: 4px; width: 207px; height: 24px; background: #fff; display: flex; align-items: center; justify-content: space-between; padding: 0 4px 0 1px; }
.search span { color: #aaa; font-size: 12px; }
.win-frame { position: absolute; left: 2011px; top: 6px; width: 10px; height: 19px; border: 2px solid #dfeef4; }

/* Ribbon */
.ribbon { display: flex; height: 108px; flex: none; background: #fff; border-top: 2px solid #cfeaf3; border-bottom: 2px solid #e8e8e8; }
.grp { display: grid; grid-template-rows: 88px 16px; grid-template-columns: minmax(0, 1fr); position: relative; flex: none; }
.grp::after { content: ""; position: absolute; right: 0; top: 8px; bottom: 2px; width: 1px; background: #e6e6e6; }
.tools { display: grid; grid-auto-flow: column; align-items: start; }
.foot { display: flex; align-items: center; }
.gl { flex: 1; text-align: center; color: #3e8eae; font-size: 13px; white-space: nowrap; }
.foot .car { margin: 0 9.500px 0 4px; flex: none; }
.tool { display: flex; flex-direction: column; align-items: center; padding-top: 2px; height: 86px; white-space: nowrap; }
.ic { width: 40px; height: 40px; display: block; }
.lb { font-size: 13px; line-height: 18px; margin-top: 4px; color: #444; letter-spacing: -.2px; }
.off svg, .off .lb { opacity: .36; }
.tool.on { background: #cde6ee; height: 92px; margin-top: 1px; padding-top: 1px; }
.smallcol { display: flex; flex-direction: column; align-items: center; padding-top: 4px; }
.ic-s { width: 30px; height: 30px; margin-bottom: 13px; }
.sc2 { padding-top: 5px; }
.ic-h { width: 36px; height: 36px; }
.ic-t { width: 22px; height: 32px; margin-top: 9px; }
.carcol { padding-top: 65px; text-align: center; }
.updown { display: flex; flex-direction: column; align-items: center; padding-top: 5px; gap: 3px; }
.g1 { width: 143px; }
.g1 .tools { grid-template-columns: 56px 62px 40px; margin-left: -22px; }
.f1 .gl { text-align: left; flex: 1; margin-left: -16px; }
.f1 .car { margin-right: 11px; }
.g2 { width: 62px; }
.g3 { width: 440px; }
.g3 .tools { grid-template-columns: 56px 66px 68px 74px 50px 58px 54px; padding-left: 12px; }
.g4 { width: 352px; }
.g4 .tools { grid-template-columns: 60px 60px 60px 42px 20px 46px 52px; padding-left: 10px; }
.g5 { width: 298px; }
.g5 .tools { grid-template-columns: 56px 56px 62px 112px; }
.anim { display: flex; flex-direction: column; padding-top: 6px; gap: 10px; }
.ac { width: 56px; height: 32px; display: block; }
.speed { display: flex; flex-direction: column; align-items: center; padding-left: 0; }
.slider { position: relative; width: 112px; height: 6px; background: #bcbcbc; margin-top: 20px; }
.slider i { position: absolute; left: 46px; top: -9px; width: 9px; height: 24px; background: #1a5f85; }
.speed .lb { margin: 12px 0 0 0; }
.g6 { width: 176px; }
.mini { display: grid; grid-template-columns: repeat(6, 28px); row-gap: 10px; padding: 12px 0 0 5px; }
.mini svg { width: 24px; height: 24px; margin-left: 2px; display: block; }
.mini i { display: block; }
.g7 { width: 144px; }
.g7 .tools { grid-template-columns: 62px 62px; padding-left: 11px; }
.g8 { width: 217px; }
.g8 .tools { grid-template-columns: 72px 74px 76px; padding-left: 5px; }

/* Filter bar */
.filterbar { height: 33px; flex: none; display: flex; align-items: center; padding-top: 4px; border-bottom: 2px solid #d5d5d5; background: #fff; position: relative; color: #bbb; font-size: 13px; }
.fb-sep { width: 1px; height: 24px; background: #e4e4e4; margin-left: 33px; margin-right: 13px; }
.fb-sel { height: 25px; border: 1px solid #c8c8c8; display: flex; align-items: center; justify-content: space-between; padding: 0 6px; flex: none; }
.s1 { width: 173px; }
.s2 { width: 260px; }
.fb-ic { margin-left: 8px; margin-right: 12px; flex: none; }
.fb-note { margin-left: 340px; color: #444; font-size: 13px; letter-spacing: -.3px; white-space: nowrap; }
.fb-sep2 { width: 1px; height: 24px; background: #e4e4e4; margin-left: 8px; }

/* Workspace */
.workspace { flex: 1; display: flex; min-height: 0; border-bottom: 2px solid #c4c4c4; }
.navpanel { width: 407px; flex: none; display: flex; flex-direction: column; border-right: 2px solid #c8c8c8; background: #fff; padding-right: 18px; }
.nav-head { height: 36px; display: flex; justify-content: space-between; align-items: center; flex: none; padding-top: 1px; }
.nav-title { margin-left: -58px; font-size: 13px; color: #444; }
.maxbtn { width: 14px; height: 13px; border: 1px solid #333; border-top-width: 3px; margin-right: 0; }
.nav-tools { height: 45px; flex: none; display: flex; align-items: center; position: relative; }
.nt { width: 30px; height: 30px; flex: none; }
.n1 { margin-left: 0; width: 12px; }
.n2 { margin-left: 8px; }
.n3 { margin-left: 10px; }
.nbtn { width: 37px; height: 37px; border: 1px solid #999; margin-left: 10px; display: flex; align-items: center; justify-content: center; flex: none; }
.nbtn.dis { border-color: #ccc; margin-left: 5px; }
.table { flex: 1; display: flex; flex-direction: column; min-height: 0; border-top: 1px solid #e2e2e2; }
.row { display: grid; grid-template-columns: 175px 58px 58px 96px; height: 23.33px; border-bottom: 1px solid #eee; flex: none; font-size: 14px; align-items: stretch; }
.row.alt { background: #fbfbfb; }
.row > div { display: flex; align-items: center; white-space: nowrap; overflow: hidden; border-right: 1px solid #f0f0f0; }
.row .c1 { border-right: 2px solid #333; color: #444; }
.row.head { height: 26px; background: #f1f1f1; }
.row.head .c1 { border-right: 1px solid #e2e2e2; }
.row.head > div { padding-left: 8px; color: #444; font-size: 14px; }
.ind-a { padding-left: 4px; }
.ind-b { padding-left: 0; }
.ind-c { padding-left: 0; }
.ind-d { padding-left: 5px; }
.blue-sq { width: 4px; height: 12px; background: #7db3c8; margin-right: 4px; flex: none; }
.dots { width: 12px; color: #bbb; font-size: 11px; margin-left: 0; }
.warn { width: 15px; text-align: left; margin-left: 4px; color: #edb64d; font-weight: 700; font-size: 15px; }
.opi { width: 20px; height: 20px; flex: none; margin-left: -4px; margin-right: 3px; }
.muted { color: #9fb9b9; }
.fo { width: 19px; height: 20px; flex: none; margin-right: 3px; }
.cd { width: 10px; height: 19px; margin-left: 9px; }
.ct { width: 16px; height: 16px; margin-left: 7px; }
.tl { color: #bdbdbd; padding-left: 6px; }
.filler { flex: 1; height: auto; border-bottom: 0; background: repeating-linear-gradient(180deg, #fff 0, #fff 22.33px, #efefef 22.33px, #efefef 23.33px); }
.hscroll { height: 38px; flex: none; position: relative; background: #fff; border-top: 1px solid #eee; margin-right: 0; }
.thumb { position: absolute; left: 0; top: 3px; width: 83px; height: 17px; background: #cdcdcd; }
.sarrow { position: absolute; left: 373px; top: 7px; border-left: 5px solid #444; border-top: 4px solid transparent; border-bottom: 4px solid transparent; }
.viewport { flex: 1; position: relative; background: #fff; min-width: 0; }
.vp-tabs { height: 31px; border-bottom: 2px solid #2b7799; }
.model { position: absolute; left: -1px; top: 0; }
.axis-x { font: 11px "Liberation Sans", sans-serif; fill: #a33; }

/* Status */
.status { height: 27px; flex: none; background: #fff; padding: 0 0 0 7px; line-height: 25px; font-size: 13px; color: #333; border-bottom: 1px solid #888; letter-spacing: -.3px; }

/* Taskbar */
.taskbar { height: 45px; flex: none; background: #424242; display: flex; align-items: stretch; padding-left: 2px; color: #ddd; font-size: 14px; position: relative; }
.ts { width: 56px; flex: none; display: flex; align-items: center; justify-content: center; }
.ts svg { width: 28px; height: 30px; }
.tb { width: 154px; margin-right: 9.500px; flex: none; display: flex; align-items: center; padding-left: 8px; border-bottom: 2px solid #6cabd9; white-space: nowrap; letter-spacing: -.2px; }
.tb svg { width: 20px; height: 30px; flex: none; margin-right: 9px; }
.b1 { margin-left: 6px; }
.t2s { margin-left: -8px; }
.tn { width: 50px; margin-right: 5px; }
.nx { width: 163px; background: #626262; margin: 0; padding-left: 10px; }
.nx-logo { width: 26px; height: 30px; background: #a8261f; color: #eee; font: 700 11px/30px "Liberation Sans", sans-serif; text-align: center; margin-right: 5px; flex: none; }
.rec { width: 155px; margin-left: 1px; margin-right: 0; padding-left: 10px; }
.rec svg { height: 20px; margin-right: 6px; }
.tqq { width: 68px; }
.doc { width: 155px; margin-right: 0; padding-left: 2px; }
.doc svg { width: 22px; margin-right: 4px; }
.mini-nx { font: 700 8px "Liberation Sans", sans-serif; fill: #333; }
.tray { flex: 1; display: flex; align-items: center; padding-left: 21px; gap: 8px; overflow: hidden; white-space: nowrap; }
.tray svg { width: 20px; height: 28px; flex: none; }
.tr-up { width: 9px; height: 9px; border-left: 1.500px solid #ddd; border-top: 1.500px solid #ddd; transform: rotate(45deg) translate(2px, 2px); flex: none; margin-right: 4px; }
.pen { margin-left: 8px; }
.ime { font-size: 18px; color: #eee; margin-left: 3px; flex: none; }
.clock { display: flex; flex-direction: column; align-items: flex-end; margin-left: 2px; font-size: 13px; line-height: 20px; width: 70px; flex: none; }
.clock b { font-weight: 400; }
.clock b:first-child { align-self: flex-start; margin-left: 22px; }

/* Dialog */
.dialog { position: absolute; left: 407px; top: 154px; width: 450px; height: 936px; background: #f2f2f2; box-shadow: 0 0 3px rgba(0,0,0,.25); display: flex; flex-direction: column; }
.dlg-title { height: 28px; flex: none; background: #04598a; color: #eef6fa; display: flex; align-items: center; padding-left: 7px; border-top: 1px solid #bfe6f2; }
.dt { margin-left: 9px; font-size: 16px; letter-spacing: 0; flex: 1; }
.dq { font: 700 19px "Liberation Sans", sans-serif; margin-right: 14px; }
.dx { font: 700 19px "Liberation Sans", "DejaVu Sans", sans-serif; margin-right: 10px; width: 16px; }
.sec { margin: 0 7px 4px; background: #fff; padding: 0 11px; flex: none; }
.sh { display: flex; align-items: center; height: 20px; margin: 0; font-weight: 400; font-size: 15px; color: #39829f; }
.sh i { width: 0; height: 0; border-left: 4.500px solid transparent; border-right: 4.500px solid transparent; border-top: 5px solid #0d5f85; margin: 0 10px 0 -1px; }
.s-type { margin-top: 5px; padding-top: 4px; padding-bottom: 10px; height: 73px; }
.sel { height: 28px; width: 164px; border: 1px solid #a8a8a8; border-bottom-width: 2px; display: flex; align-items: center; justify-content: space-between; padding: 0 7px 0 5px; font-size: 14px; color: #444; background: #fff; flex: none; }
.sel .car { border-top-color: #222; }
.sel.wide { width: 100%; margin-top: 11px; }
.s-sub { padding-top: 5px; padding-left: 21px; padding-bottom: 14px; height: 521px; }
.s-sub .sh { margin-left: -10px; }
.tiles { display: grid; grid-template-columns: repeat(6, 56px); gap: 11.700px; margin-top: 19.700px; }
.tile { width: 56px; height: 56px; border: 2px solid #444; font: 17.500px/19px "Liberation Serif", "Noto Sans CJK SC", serif; letter-spacing: 1px; text-align: center; display: flex; align-items: center; justify-content: center; padding-top: 0; }
.sel1 { box-shadow: 0 0 0 5px #d3e6ea; }
.lg { background: #cae6a8; color: #5c8a4e; border-color: #40503a; }
.cy { background: #80dcf6; color: #37849e; border-color: #3c5f6a; }
.pu { background: #c77bdb; color: #7e4a92; border-color: #553a5e; }
.dg { background: #0a7a1e; color: #0a5a14; border-color: #304a30; }
.or { background: #fbcf92; color: #8a6c46; border-color: #6a5a44; }
.lt { background: linear-gradient(135deg, #cdeebd, #8ed887); color: #4d7a46; border-color: #4a6a44; }
.mg { background: #90d680; color: #3b6e3b; border-color: #456a44; }
.bl { background: #66c2ff; color: #2c6a9c; border-color: #3a5e78; }
.gr { background: #52bc52; color: #2a702a; border-color: #385a38; }
.tt { background: #7a6d28; color: #50461c; border-color: #4a4420; }
.tt.dk { border-color: #333; }
.tm { background: linear-gradient(90deg, #cfc8a8, #7a6d28 45%); color: #4f4a2a; border-color: #4a4420; }
.sk { background: #a8d4ff; color: #4c7ba8; border-color: #4a5f72; }
.gy { background: #d2d6dc; color: #5c6168; border-color: #4a4a4a; }
.pk { background: #ff8f8f; color: #a14a4a; border-color: #5a3434; }
.tq { background: #3edcaa; color: #1d7c5c; border-color: #2a5a4a; }
.vi { background: #8a8aff; color: #43439a; border-color: #45456e; }
.fr { background-image: linear-gradient(90deg, transparent 72%, rgba(255,255,255,.55)); }
.fr2 { background-image: linear-gradient(90deg, transparent 85%, rgba(255,255,255,.5)); }
.fl { background-image: linear-gradient(90deg, rgba(255,255,255,.55), transparent 32%); }
.s-pos { padding-top: 5px; height: 169px; }
.frow { display: flex; justify-content: space-between; align-items: center; height: 28px; margin-bottom: 3.670px; font-size: 14px; color: #444; }
.sh + .frow { margin-top: 11px; }
.s-name { padding-top: 5px; height: 72px; margin-bottom: 0; }
.namebox { height: 26px; margin-top: 11px; border: 1px solid #a8a8a8; border-bottom-width: 2px; padding: 2px 4px; font-size: 14px; line-height: 20px; }
.namebox span { background: #1a73d4; color: #dcecf8; display: inline-block; width: 119px; white-space: nowrap; overflow: hidden; letter-spacing: -.4px; }
.dlg-foot { flex: 1; display: flex; justify-content: flex-end; gap: 6px; padding: 14px 18px 0 0; background: #f4f4f4; }
.btn { width: 63px; height: 29px; border: 1px solid #4e8aa5; background: #fff; color: #3a6e88; font: 14px "Noto Sans CJK SC", sans-serif; padding: 0; }
.btn.pri { background: #04598a; color: #d8e8f0; border-color: #04598a; }

/* Captions */
.cap { position: absolute; display: grid; justify-items: center; z-index: 5; }
.cc { display: flex; flex-direction: column; align-items: center; width: 120px; }
.py {
  height: 50px; font: 600 42px/50px "Noto Sans", sans-serif; white-space: nowrap;
  -webkit-text-stroke: 10px #000; paint-order: stroke fill;
  text-shadow: 10px 0 #000, 7px 7px #000, 0 10px #000, -7px 7px #000, -10px 0 #000, -7px -7px #000, 0 -10px #000, 7px -7px #000,
    9.200px 3.800px #000, 3.800px 9.200px #000, -3.800px 9.200px #000, -9.200px 3.800px #000, -9.200px -3.800px #000, -3.800px -9.200px #000, 3.800px -9.200px #000, 9.200px -3.800px #000;
}
.hz {
  height: 122px; font: 500 112px/122px "Noto Sans CJK SC", sans-serif; white-space: nowrap;
  -webkit-text-stroke: 16px #000; paint-order: stroke fill; transform: scaleY(1.08);
  text-shadow: 15px 0 #000, 13.900px 5.700px #000, 10.600px 10.600px #000, 5.700px 13.900px #000, 0 15px #000, -5.700px 13.900px #000, -10.600px 10.600px #000, -13.900px 5.700px #000, -15px 0 #000, -13.900px -5.700px #000, -10.600px -10.600px #000, -5.700px -13.900px #000, 0 -15px #000, 5.700px -13.900px #000, 10.600px -10.600px #000, 13.900px -5.700px #000,
    7px 0 #000, 5px 5px #000, 0 7px #000, -5px 5px #000, -7px 0 #000, -5px -5px #000, 0 -7px #000, 5px -5px #000;
}
.cap1 { left: 473px; top: 397px; grid-template-columns: 170px 172px 162px 56px 150px 180px 120px 222px; color: #ffe22e; }
.cap2 { left: 835px; top: 684px; grid-template-columns: 160px 164px 176px 138px 210px 98px; color: #04e2fb; }
.nudge-r .py { transform: translateX(8px); }
.nudge-l .py { transform: translateX(-7px); }
.dash .hz { transform: translateY(-50px) scale(1.6, .9); }
.yi .py { transform: translate(10px, 20px); }
.yi .hz { transform: translateY(20px); }
```
